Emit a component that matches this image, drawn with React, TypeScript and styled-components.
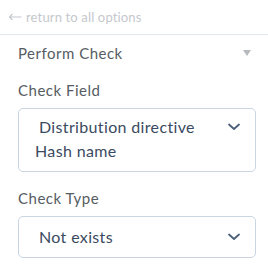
import React from "react";
import styled, { createGlobalStyle } from "styled-components";

const GlobalStyle = createGlobalStyle`
  body {
    margin: 0;
    background: #ffffff;
    font-family: Lato, "Open Sans", sans-serif;
  }
`;

const Panel = styled.div`
  width: 268px;
`;

const BackBar = styled.div`
  height: 34px;
  display: flex;
  align-items: center;
  gap: 4px;
  padding-left: 8px;
  border-bottom: 1px solid #dfe6ec;
  color: #c4c8cd;
  font-size: 13px;
  letter-spacing: 0.15px;
`;

const Body = styled.div`
  padding: 0 12px 0 18px;
`;

const SectionRow = styled.div`
  margin-top: 8px;
  height: 20px;
  display: flex;
  align-items: center;
  justify-content: space-between;
  color: #565c63;
  font-size: 15px;
  letter-spacing: 0.5px;
`;

const Caret = styled.span`
  width: 0;
  height: 0;
  margin-right: 5px;
  border-left: 4px solid transparent;
  border-right: 4px solid transparent;
  border-top: 6px solid #b6b9bd;
`;

const Label = styled.div<{ $top: number }>`
  margin-top: ${(p) => p.$top}px;
  line-height: 20px;
  color: #565c63;
  font-size: 15px;
  letter-spacing: 0.5px;
`;

const SelectBox = styled.div<{ $pad: string }>`
  margin-top: 8px;
  box-sizing: border-box;
  width: 238px;
  padding: ${(p) => p.$pad};
  border: 1px solid #c9d5e1;
  border-radius: 5px;
  display: flex;
  justify-content: space-between;
  align-items: flex-start;
  color: #3a4a5f;
  font-size: 16px;
  line-height: 24px;
  letter-spacing: 0.35px;
`;

const Values = styled.div`
  display: flex;
  flex-direction: column;
`;

const Value = styled.span<{ $indent?: number }>`
  padding-left: ${(p) => p.$indent ?? 0}px;
`;

const ChevronWrap = styled.span`
  height: 24px;
  display: flex;
  align-items: center;
`;

const Chevron = () => (
  <ChevronWrap>
    <svg width="12" height="8" viewBox="0 0 12 8">
      <polyline points="1,1.5 6,6 11,1.5" fill="none" stroke="#4c607a" strokeWidth="1.8" strokeLinecap="round" strokeLinejoin="round" />
    </svg>
  </ChevronWrap>
);

export default function App() {
  return (
    <Panel>
      <GlobalStyle />
      <BackBar>
        <svg width="14" height="8" viewBox="0 0 14 8">
          <path d="M13.5 4H1.5M4.5 1L1.5 4L4.5 7" fill="none" stroke="#c4c8cd" strokeWidth="1.2" />
        </svg>
        return to all options
      </BackBar>
      <Body>
        <SectionRow>
          Perform Check
          <Caret />
        </SectionRow>
        <Label $top={17}>Check Field</Label>
        <SelectBox $pad="6px 15px 8px 16px">
          <Values>
            <Value $indent={4}>Distribution directive</Value>
            <Value>Hash name</Value>
          </Values>
          <Chevron />
        </SelectBox>
        <Label $top={16}>Check Type</Label>
        <SelectBox $pad="8px 15px 8px 20px">
          <Value>Not exists</Value>
          <Chevron />
        </SelectBox>
      </Body>
    </Panel>
  );
}
